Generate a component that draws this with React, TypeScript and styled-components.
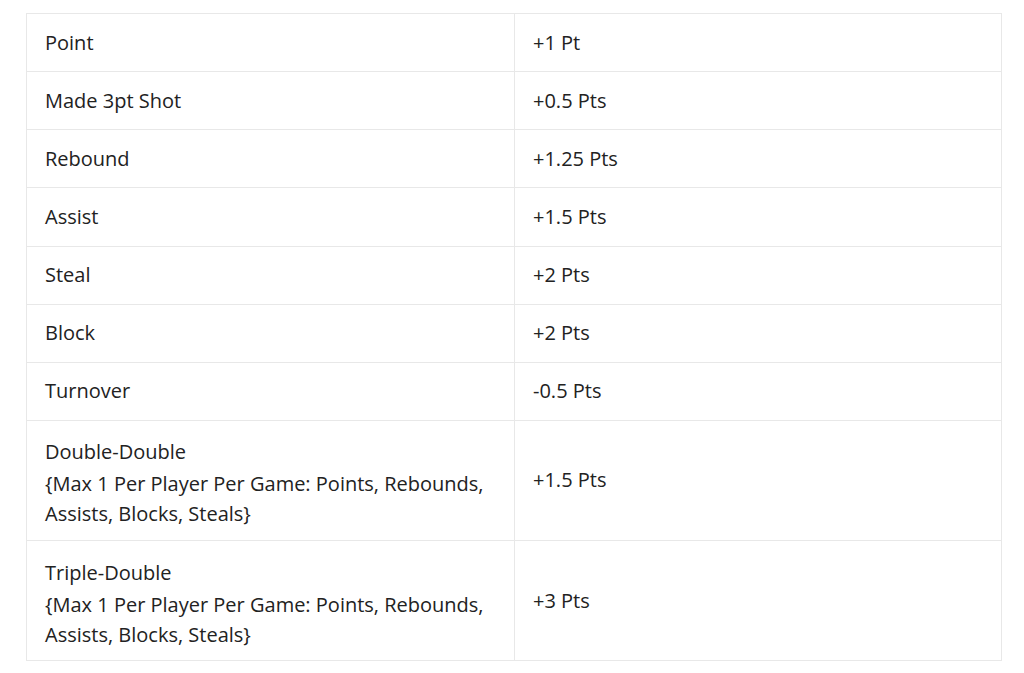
import React from "react";
import styled, { createGlobalStyle } from "styled-components";

const Global = createGlobalStyle`
  html, body { margin: 0; padding: 0; background: #fff; }
  body { font-family: "Open Sans", "Noto Sans", sans-serif; color: #222; }
`;

const Page = styled.div`
  padding: 13px 22px 0 26px;
`;

const Table = styled.table`
  width: 976px;
  border-collapse: collapse;
  border: 1px solid #e8e8e8;
  font-size: 20px;
  line-height: 30px;
`;

const Cell = styled.td<{ $right?: boolean; $multi?: boolean }>`
  border: 1px solid #e8e8e8;
  padding: ${(p) => (p.$multi ? "16.5px 18px 10.64px" : "13.57px 18px")};
  vertical-align: middle;
  width: ${(p) => (p.$right ? "auto" : "451px")};
  text-align: left;
`;

const Title = styled.div`
  margin-bottom: 2px;
`;

type Row = { label: string; note?: string; value: string };

const rows: Row[] = [
  { label: "Point", value: "+1 Pt" },
  { label: "Made 3pt Shot", value: "+0.5 Pts" },
  { label: "Rebound", value: "+1.25 Pts" },
  { label: "Assist", value: "+1.5 Pts" },
  { label: "Steal", value: "+2 Pts" },
  { label: "Block", value: "+2 Pts" },
  { label: "Turnover", value: "-0.5 Pts" },
  {
    label: "Double-Double",
    note: "{Max 1 Per Player Per Game: Points, Rebounds, Assists, Blocks, Steals}",
    value: "+1.5 Pts",
  },
  {
    label: "Triple-Double",
    note: "{Max 1 Per Player Per Game: Points, Rebounds, Assists, Blocks, Steals}",
    value: "+3 Pts",
  },
];

export default function App() {
  return (
    <>
      <Global />
      <Page>
        <Table>
          <tbody>
            {rows.map((r) => (
              <tr key={r.label}>
                <Cell $multi={!!r.note}>
                  {r.note ? (
                    <>
                      <Title>{r.label}</Title>
                      <div>{r.note}</div>
                    </>
                  ) : (
                    r.label
                  )}
                </Cell>
                <Cell $right>{r.value}</Cell>
              </tr>
            ))}
          </tbody>
        </Table>
      </Page>
    </>
  );
}
